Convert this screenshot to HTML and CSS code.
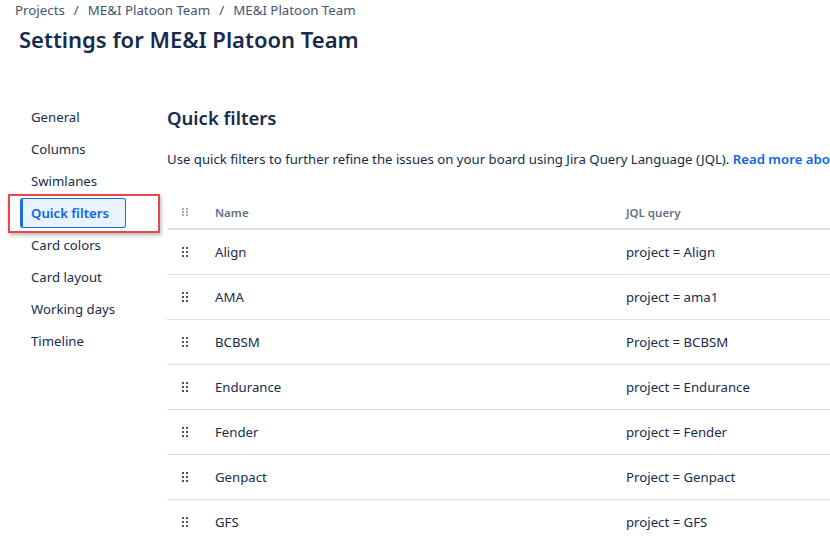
FILE: index.html
```html
<!DOCTYPE html>
<html>
<head>
<meta charset="utf-8">
<link rel="stylesheet" href="styles.css">
</head>
<body>
<div class="page">
  <nav class="crumbs">
    <span>Projects</span><span class="sep">/</span><span>ME&amp;I Platoon Team</span><span class="sep">/</span><span>ME&amp;I Platoon Team</span>
  </nav>
  <h1 class="title">Settings for ME&amp;I Platoon Team</h1>
  <div class="main">
    <ul class="side">
      <li class="item">General</li>
      <li class="item">Columns</li>
      <li class="item">Swimlanes</li>
      <li class="item active"><span class="box">Quick filters</span><span class="mark"></span></li>
      <li class="item">Card colors</li>
      <li class="item">Card layout</li>
      <li class="item">Working days</li>
      <li class="item">Timeline</li>
    </ul>
    <section class="content">
      <h2 class="heading">Quick filters</h2>
      <p class="desc">Use quick filters to further refine the issues on your board using Jira Query Language (JQL). <a class="link">Read more about quick filters</a></p>
      <div class="table">
        <div class="row head">
          <div class="c-drag"><span class="dots small"><i></i><i></i><i></i><i></i><i></i><i></i></span></div>
          <div class="c-name">Name</div>
          <div class="c-jql">JQL query</div>
        </div>
        <div class="row">
          <div class="c-drag"><span class="dots"><i></i><i></i><i></i><i></i><i></i><i></i></span></div>
          <div class="c-name">Align</div><div class="c-jql">project = Align</div>
        </div>
        <div class="row">
          <div class="c-drag"><span class="dots"><i></i><i></i><i></i><i></i><i></i><i></i></span></div>
          <div class="c-name">AMA</div><div class="c-jql">project = ama1</div>
        </div>
        <div class="row">
          <div class="c-drag"><span class="dots"><i></i><i></i><i></i><i></i><i></i><i></i></span></div>
          <div class="c-name">BCBSM</div><div class="c-jql">Project = BCBSM</div>
        </div>
        <div class="row">
          <div class="c-drag"><span class="dots"><i></i><i></i><i></i><i></i><i></i><i></i></span></div>
          <div class="c-name">Endurance</div><div class="c-jql">project = Endurance</div>
        </div>
        <div class="row">
          <div class="c-drag"><span class="dots"><i></i><i></i><i></i><i></i><i></i><i></i></span></div>
          <div class="c-name">Fender</div><div class="c-jql">project = Fender</div>
        </div>
        <div class="row">
          <div class="c-drag"><span class="dots"><i></i><i></i><i></i><i></i><i></i><i></i></span></div>
          <div class="c-name">Genpact</div><div class="c-jql">Project = Genpact</div>
        </div>
        <div class="row">
          <div class="c-drag"><span class="dots"><i></i><i></i><i></i><i></i><i></i><i></i></span></div>
          <div class="c-name">GFS</div><div class="c-jql">project = GFS</div>
        </div>
      </div>
    </section>
  </div>
</div>
</body>
</html>
```
FILE: styles.css
```css
html, body {
  margin: 0;
  padding: 0;
  background: #ffffff;
  overflow: hidden;
  width: 830px;
  height: 544px;
}
body {
  font-family: "Noto Sans", "Open Sans", "Liberation Sans", sans-serif;
  color: #172b4d;
  font-size: 13.2px;
}
.page {
  padding: 0 0 0 15px;
}
.crumbs {
  height: 20px;
  line-height: 20px;
  color: #44546f;
  font-size: 13.3px;
  white-space: nowrap;
}
.crumbs .sep {
  margin: 0 9px;
}
.title {
  margin: 7px 0 0 4px;
  font-size: 22px;
  font-weight: 600;
  line-height: 24px;
  color: #172b4d;
  white-space: nowrap;
}
.main {
  display: flex;
  margin-top: 50px;
}
.side {
  list-style: none;
  margin: 0 0 0 5px;
  padding: 0;
  width: 147px;
  flex: none;
}
.item {
  position: relative;
  height: 32px;
  line-height: 32px;
  padding-left: 11px;
  white-space: nowrap;
}
.item.active {
  padding-left: 0;
  padding-top: 1px;
  height: 31px;
}
.box {
  display: block;
  box-sizing: border-box;
  width: 106px;
  height: 30px;
  line-height: 28px;
  padding-left: 8px;
  background: #e9f2ff;
  border: 1px solid #1d6ae5;
  border-left: 3px solid #1d6ae5;
  border-radius: 3px;
  color: #0c66e4;
  font-weight: 600;
}
.mark {
  position: absolute;
  left: -12px;
  top: -3px;
  width: 152px;
  height: 39px;
  box-sizing: border-box;
  border: 2px solid #e5484d;
  box-shadow: 1px 2px 4px rgba(0,0,0,0.3);
  pointer-events: none;
}
.content {
  flex: 1;
  min-width: 0;
  margin-top: 5px;
}
.heading {
  margin: 0;
  font-size: 18.5px;
  font-weight: 600;
  line-height: 24px;
  white-space: nowrap;
}
.desc {
  margin: 19px 0 0 0;
  line-height: 20px;
  white-space: nowrap;
}
.link {
  color: #0c66e4;
  font-weight: 600;
}
.table {
  margin-top: 27px;
  width: 700px;
}
.row {
  display: flex;
  align-items: center;
  height: 44px;
  border-bottom: 1px solid #dcdfe4;
  white-space: nowrap;
}
.row.head {
  height: 32px;
  border-bottom: 2px solid #dcdfe4;
  font-size: 11.5px;
  font-weight: 600;
  color: #626f86;
}
.c-drag {
  width: 48px;
  padding-left: 15px;
  box-sizing: border-box;
  display: flex;
}
.c-name {
  width: 411px;
}
.c-jql {
  flex: 1;
}
.dots {
  display: grid;
  grid-template-columns: 2px 2px;
  grid-auto-rows: 2px;
  column-gap: 2px;
  row-gap: 2px;
}
.dots i {
  display: block;
  width: 2px;
  height: 2px;
  background: #44546f;
}
.dots.small {
  row-gap: 1px;
  column-gap: 2px;
}
.dots.small i {
  background: #a5adba;
  width: 1.5px;
  height: 1.5px;
}
```
